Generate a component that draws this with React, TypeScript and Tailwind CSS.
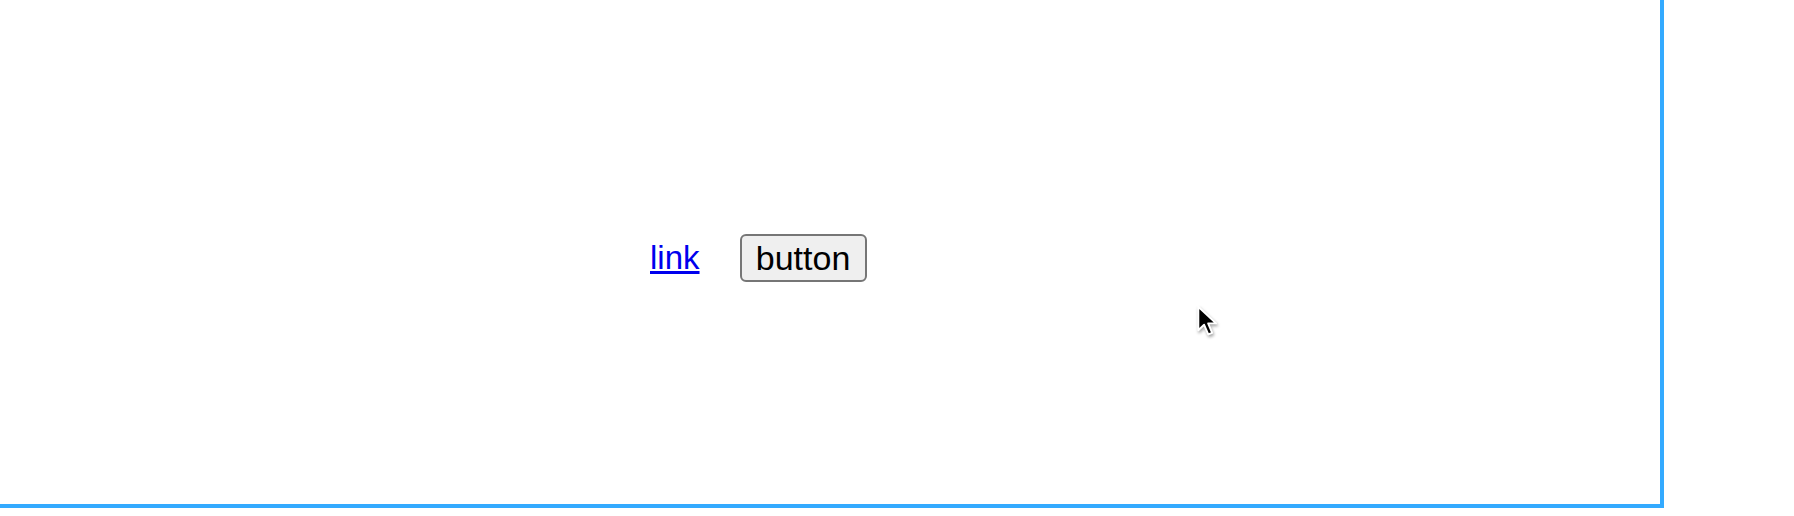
export default function App() {
  return (
    <main className="relative h-[516px] w-[1794px] overflow-hidden bg-white font-['Liberation_Sans',Arial,sans-serif]">
      <div className="h-[508px] w-[1664px] border-b-4 border-r-4 border-[#33aaff] pl-[650px] pt-[234px]">
        <div className="flex items-center gap-[40px]">
          <a href="#" className="text-[33px] leading-[38px] text-[#0000ee] underline">
            link
          </a>
          <button
            type="button"
            className="flex h-[48px] w-[127px] items-center justify-center rounded-[6px] border-2 border-[#767676] bg-[#efefef] text-[34px] leading-[38px] text-black"
          >
            button
          </button>
        </div>
      </div>

      {/* mouse pointer */}
      <svg
        className="absolute left-[1195px] top-[304px] drop-shadow-[1px_2px_1.5px_rgba(0,0,0,0.35)]"
        width="26"
        height="36"
        viewBox="0 0 18 26"
      >
        <path
          d="M2 2 L2 19 L6.2 15 L9.2 22 L12 20.8 L9.1 14 L14.8 14 Z"
          fill="#000"
          stroke="#fff"
          strokeWidth="1.4"
          strokeLinejoin="round"
        />
      </svg>
    </main>
  );
}
